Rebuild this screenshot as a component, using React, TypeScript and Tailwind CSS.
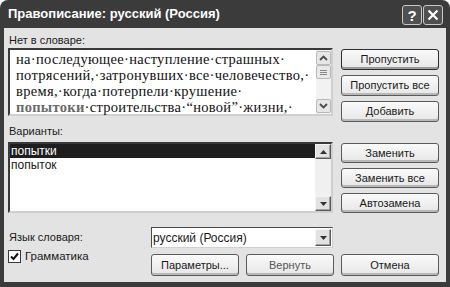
import type { ReactNode } from 'react';

const ui = { fontFamily: '"Liberation Sans", "DejaVu Sans", sans-serif' };
const serif = { fontFamily: '"Liberation Serif", "DejaVu Serif", serif' };

const Btn = ({ children, strong, className = '' }: { children: ReactNode; strong?: boolean; className?: string }) => (
  <div
    className={`flex shrink-0 items-center justify-center rounded-[3px] border bg-gradient-to-b from-[#fafafa] to-[#e6e6e6] text-[11px] text-[#1a1a1a] ${
      strong ? 'border-[#2e2e2e] shadow-[inset_0_-2px_0_#9a9a9a]' : 'border-[#5a5a5a] shadow-[inset_0_-2px_0_#b8b8b8]'
    } ${className}`}
  >
    {children}
  </div>
);

const Chevron = ({ down }: { down?: boolean }) => (
  <svg width="9" height="6" viewBox="0 0 9 6">
    <path d={down ? 'M1 1 L4.5 4.5 L8 1' : 'M1 5 L4.5 1.5 L8 5'} fill="none" stroke="#4a4a4a" strokeWidth="1.8" />
  </svg>
);

const Tri = ({ down }: { down?: boolean }) => (
  <svg width="7" height="4" viewBox="0 0 7 4">
    <path d={down ? 'M0 0 H7 L3.5 4 Z' : 'M0 4 H7 L3.5 0 Z'} fill="#333" />
  </svg>
);

const ClassicBox = ({ children, className = '' }: { children?: ReactNode; className?: string }) => (
  <div
    className={`flex items-center justify-center border border-t-[#f4f4f4] border-l-[#f4f4f4] border-b-[#5a5a5a] border-r-[#5a5a5a] bg-[#e2e2e2] shadow-[inset_-1px_-1px_0_#a0a0a0] ${className}`}
  >
    {children}
  </div>
);

export default function App() {
  return (
    <div className="flex h-[287px] w-[450px] flex-col rounded-t-[8px] bg-[#3b3b3b] px-[4px] pb-[5px]" style={ui}>
      {/* title bar */}
      <div className="flex h-[28px] shrink-0 items-center justify-between pl-[4px] pr-[3px]">
        <span className="text-[13px] font-bold text-white">Правописание: русский (Россия)</span>
        <div className="flex gap-[1px] pt-[2px]">
          <div className="flex h-[20px] w-[20px] items-center justify-center rounded-[3px] border border-[#c8c8c8] bg-[#505050] text-[15px] font-bold leading-none text-white">
            ?
          </div>
          <div className="flex h-[20px] w-[20px] items-center justify-center rounded-[3px] border border-[#c8c8c8] bg-[#505050]">
            <svg width="12" height="12" viewBox="0 0 12 12">
              <path d="M1.5 1.5 L10.5 10.5 M10.5 1.5 L1.5 10.5" stroke="#fff" strokeWidth="2.2" />
            </svg>
          </div>
        </div>
      </div>

      {/* body */}
      <div className="flex flex-1 flex-col bg-[#e3e3e3] pl-[4px] pr-[2px] text-[11px] text-[#1a1a1a]">
        <div className="pl-[1px] pt-[5px] leading-[14px]">Нет в словаре:</div>
        <div className="mt-[1px] flex h-[68px] gap-[8px]">
          <div className="flex h-[68px] w-[325px] border-2 border-t-[#3a3a3a] border-l-[#3a3a3a] border-b-[#cfcfcf] border-r-[#cfcfcf] bg-white">
            <div className="flex-1 pl-[6px] pt-[1px] text-[14.5px] leading-[16px] tracking-[0.3px] text-[#111]" style={serif}>
              <div>на·последующее·наступление·страшных·</div>
              <div>потрясений,·затронувших·все·человечество,·</div>
              <div>время,·когда·потерпели·крушение·</div>
              <div>
                <span className="font-bold text-[#6a6a6a]">попытоки</span>·строительства·“новой”·жизни,·
              </div>
            </div>
            <div className="flex w-[15px] flex-col justify-between bg-[#f2f2f2] pt-[1px] pb-[1px]">
              <div className="flex h-[14px] items-center justify-center rounded-[2px] border border-[#b9b9b9] bg-[#e6e6e6]">
                <Chevron />
              </div>
              <div className="-mt-[20px] flex h-[14px] flex-col items-center justify-center gap-[1px] rounded-[2px] border border-[#b9b9b9] bg-[#e9e9e9]">
                <div className="h-px w-[7px] bg-[#888]" />
                <div className="h-px w-[7px] bg-[#888]" />
                <div className="h-px w-[7px] bg-[#888]" />
              </div>
              <div className="flex h-[14px] items-center justify-center rounded-[2px] border border-[#b9b9b9] bg-[#e6e6e6]">
                <Chevron down />
              </div>
            </div>
          </div>
          <div className="flex w-[98px] flex-col gap-[5px] pt-[1px]">
            <Btn strong className="h-[21px]">Пропустить</Btn>
            <Btn className="h-[21px]">Пропустить все</Btn>
            <Btn className="h-[21px]">Добавить</Btn>
          </div>
        </div>

        <div className="pl-[1px] pt-[8px] leading-[14px]">Варианты:</div>
        <div className="mt-[4px] flex h-[71px] gap-[8px]">
          <div className="flex h-[71px] w-[325px] border-2 border-t-[#3a3a3a] border-l-[#3a3a3a] border-b-[#cfcfcf] border-r-[#cfcfcf] bg-white">
            <div className="flex-1 text-[12px] leading-[14px]">
              <div className="bg-[#1e1e1e] pl-[1px] text-white">попытки</div>
              <div className="pl-[1px]">попыток</div>
            </div>
            <div className="flex w-[16px] flex-col justify-between bg-[#f0f0f0]">
              <ClassicBox className="h-[15px]">
                <Tri />
              </ClassicBox>
              <ClassicBox className="h-[15px]">
                <Tri down />
              </ClassicBox>
            </div>
          </div>
          <div className="flex w-[98px] flex-col gap-[5px] pt-[1px]">
            <Btn className="h-[20px]">Заменить</Btn>
            <Btn className="h-[20px]">Заменить все</Btn>
            <Btn className="h-[20px]">Автозамена</Btn>
          </div>
        </div>

        <div className="mt-[14px] flex items-center">
          <span className="w-[143px] pl-[1px]">Язык словаря:</span>
          <div className="flex h-[21px] w-[182px] items-center border border-t-[#4a4a4a] border-l-[#4a4a4a] border-b-[#d0d0d0] border-r-[#d0d0d0] bg-white pl-[1px]">
            <span className="flex-1 text-[12px]">русский (Россия)</span>
            <ClassicBox className="mr-[1px] h-[17px] w-[16px]">
              <Tri down />
            </ClassicBox>
          </div>
        </div>

        <div className="flex">
          <div className="flex w-[143px] items-start gap-[4px] pt-[2px]">
            <div className="flex h-[13px] w-[13px] items-center justify-center border border-[#3a3a3a] bg-white">
              <svg width="9" height="9" viewBox="0 0 9 9">
                <path d="M1 4.5 L3.5 7 L8 1.5" fill="none" stroke="#111" strokeWidth="2" />
              </svg>
            </div>
            <span className="text-[11.5px] leading-[13px]">Грамматика</span>
          </div>
          <div className="flex gap-[7px] pt-[6px]">
            <Btn className="h-[22px] w-[88px]">Параметры...</Btn>
            <Btn className="h-[22px] w-[88px] text-[#555]">Вернуть</Btn>
            <Btn className="h-[22px] w-[98px]">Отмена</Btn>
          </div>
        </div>
      </div>
    </div>
  );
}
